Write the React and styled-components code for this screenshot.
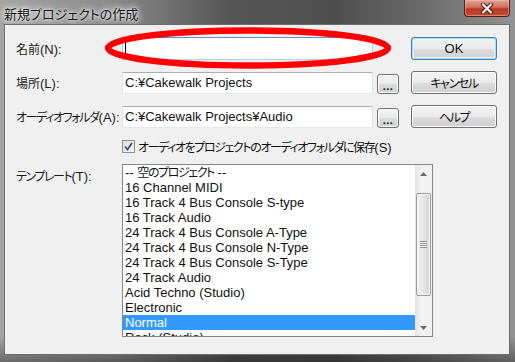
import React from "react";
import styled, { createGlobalStyle, css } from "styled-components";

const GlobalStyle = createGlobalStyle`
  html, body { margin: 0; padding: 0; background: #3c3c3c; }
  body {
    font-family: "Liberation Sans", "Noto Sans CJK JP", sans-serif;
    font-size: 13px;
    font-feature-settings: "palt";
    color: #111;
  }
  * { box-sizing: border-box; }
`;

// Meiryo UI kana are much narrower than Noto's, so squeeze the kana runs
const Jp = styled.span`
  font-size: 12px;
  letter-spacing: ${(p) => (p.kanji ? "0" : "-1.4px")};
`;

const templates = [
  "16 Channel MIDI",
  "16 Track 4 Bus Console S-type",
  "16 Track Audio",
  "24 Track 4 Bus Console A-Type",
  "24 Track 4 Bus Console N-Type",
  "24 Track 4 Bus Console S-Type",
  "24 Track Audio",
  "Acid Techno (Studio)",
  "Electronic",
  "Normal",
  "Rock (Studio)",
];

const Window = styled.div`
  position: relative;
  width: 515px;
  height: 362px;
  display: flex;
  flex-direction: column;
  padding: 0 5px 7px 4px;
  background:
    linear-gradient(to bottom, rgba(0,0,0,0) 93%, rgba(0,0,0,0.35) 100%),
    linear-gradient(to right, #a4a4a4 0%, #8a8a8a 22%, #555 45%, #4e4e4e 65%, #6a6a6a 82%, #939393 100%);
`;

const TitleBar = styled.div`
  height: 24px;
  flex-shrink: 0;
  display: flex;
  justify-content: space-between;
  align-items: flex-start;
`;

const Title = styled.div`
  padding-top: 4px;
  font-size: 13px;
  color: #141414;
  text-shadow: 0 0 6px rgba(255,255,255,0.95), 0 0 10px rgba(255,255,255,0.8), 0 0 3px rgba(255,255,255,0.9);
`;

const CloseButton = styled.div`
  width: 46px;
  height: 17px;
  display: flex;
  align-items: center;
  justify-content: center;
  border: 1px solid #5a1a12;
  border-top: none;
  border-radius: 0 0 4px 4px;
  background: linear-gradient(to bottom, #e2a396 0%, #d0705c 45%, #b63a24 55%, #c24a31 100%);
  box-shadow: inset 0 0 0 1px rgba(255,200,190,0.45);
`;

const Client = styled.div`
  flex: 1;
  background: #f0f0f0;
  border: 1px solid #6c6c6c;
  display: grid;
  grid-template-columns: 106px 251px 38px 86px;
  grid-template-rows: 23px 23px 23px 14px 173px;
  row-gap: 11px;
  padding: 12px 0 0 11px;
  align-content: start;
`;

const Label = styled.div`
  align-self: ${(p) => (p.top ? "start" : "center")};
  padding-top: ${(p) => (p.top ? "3px" : "0")};
  white-space: nowrap;
  color: #1a1a1a;
`;

const TextBox = styled.div`
  height: ${(p) => (p.focused ? "23px" : "22px")};
  align-self: center;
  background: #fff;
  border: 1px solid;
  border-color: ${(p) =>
    p.focused ? "#5c93bc #b5cfe7 #b5cfe7 #a4c9e3" : "#abadb3 #dbdfe6 #e3e9ef #e2e3ea"};
  display: flex;
  align-items: center;
  padding-left: 2px;
  white-space: nowrap;
  overflow: hidden;
`;

const Caret = styled.span`
  width: 1px;
  height: 19px;
  background: #000;
`;

const buttonBase = css`
  border: 1px solid #707070;
  border-radius: 3px;
  background: linear-gradient(to bottom, #f2f2f2 0%, #ebebeb 50%, #dddddd 51%, #cfcfcf 100%);
  box-shadow: inset 0 0 0 1px #fcfcfc;
  display: flex;
  align-items: center;
  justify-content: center;
  color: #111;
`;

const BrowseButton = styled.div`
  ${buttonBase}
  width: 22px;
  height: 20px;
  margin-left: 4px;
  align-self: end;
  font-weight: bold;
  font-size: 11px;
  padding-top: 4px;
  letter-spacing: 0.5px;
`;

const Button = styled.div`
  ${buttonBase}
  height: 23px;
  ${(p) =>
    p.primary &&
    css`
      border-color: #3c7fb1;
      box-shadow: inset 0 0 0 1px #9fdcf6, inset 0 0 0 2px #e4f5fc;
    `}
`;

const CheckRow = styled.div`
  grid-column: 2 / 5;
  display: flex;
  align-items: center;
  gap: 3px;
  white-space: nowrap;
`;

const CheckBox = styled.div`
  width: 13px;
  height: 13px;
  border: 1px solid #8e8f8f;
  background: linear-gradient(135deg, #dcdcdc 0%, #f6f6f6 100%);
  display: flex;
  align-items: center;
  justify-content: center;
`;

const ListBox = styled.div`
  grid-column: 2 / 5;
  width: 311px;
  height: 173px;
  border: 1px solid #828790;
  background: #fff;
  display: flex;
`;

const List = styled.div`
  flex: 1;
  overflow: hidden;
`;

const Item = styled.div`
  height: 15px;
  line-height: 15px;
  padding-left: 2px;
  white-space: nowrap;
  background: ${(p) => (p.selected ? "#3399ff" : "transparent")};
  color: ${(p) => (p.selected ? "#fff" : "#111")};
`;

const ScrollBar = styled.div`
  width: 17px;
  display: flex;
  flex-direction: column;
  background: linear-gradient(to right, #e3e3e3, #f2f2f2 40%, #f2f2f2);
`;

const ArrowButton = styled.div`
  height: 17px;
  display: flex;
  align-items: center;
  justify-content: center;
`;

const Track = styled.div`
  flex: 1;
  display: flex;
  flex-direction: column;
  padding: 11px 0 0;
`;

const Thumb = styled.div`
  height: 103px;
  margin: 0 1px;
  border: 1px solid #9a9a9a;
  border-radius: 2px;
  background: linear-gradient(to right, #f2f2f2 0%, #e6e6e6 50%, #d4d4d4 100%);
  box-shadow: inset 0 0 0 1px #fafafa;
  display: flex;
  align-items: center;
  justify-content: center;
`;

const Grip = styled.div`
  width: 7px;
  height: 7px;
  background: repeating-linear-gradient(to bottom, #8a8a8a 0 1px, #fff 1px 2px);
`;

const Annotation = styled.svg`
  position: absolute;
  left: 104px;
  top: 27px;
  pointer-events: none;
`;

function Arrow({ up }) {
  return (
    <svg width="7" height="4" viewBox="0 0 7 4">
      <polygon points={up ? "0,4 3.5,0 7,4" : "0,0 7,0 3.5,4"} fill="#6a6a6a" />
    </svg>
  );
}

export default function App() {
  return (
    <>
      <GlobalStyle />
      <Window>
        <TitleBar>
          <Title>新規プロジェクトの作成</Title>
          <CloseButton>
            <svg width="14" height="11" viewBox="0 0 14 11">
              <path d="M3 1.5 L11 9.5 M11 1.5 L3 9.5" stroke="#4a1008" strokeWidth="4" strokeLinecap="round" />
              <path d="M3 1.5 L11 9.5 M11 1.5 L3 9.5" stroke="#fff" strokeWidth="2.2" strokeLinecap="round" />
            </svg>
          </CloseButton>
        </TitleBar>
        <Client>
          <Label>
            <Jp kanji>名前</Jp>(N):
          </Label>
          <TextBox focused>
            <Caret />
          </TextBox>
          <div />
          <Button primary>OK</Button>

          <Label>
            <Jp kanji>場所</Jp>(L):
          </Label>
          <TextBox>C:¥Cakewalk Projects</TextBox>
          <BrowseButton>...</BrowseButton>
          <Button>
            <Jp>キャンセル</Jp>
          </Button>

          <Label>
            <Jp>オーディオフォルダ</Jp>(A):
          </Label>
          <TextBox>C:¥Cakewalk Projects¥Audio</TextBox>
          <BrowseButton>...</BrowseButton>
          <Button>
            <Jp>ヘルプ</Jp>
          </Button>

          <div />
          <CheckRow>
            <CheckBox>
              <svg width="9" height="9" viewBox="0 0 9 9">
                <path d="M1 4.5 L3.5 7.5 L8 1" stroke="#3a4f80" strokeWidth="1.8" fill="none" />
              </svg>
            </CheckBox>
            <span>
              <Jp>オーディオをプロジェクトのオーディオフォルダに保存</Jp>(S)
            </span>
          </CheckRow>

          <Label top>
            <Jp>テンプレート</Jp>(T):
          </Label>
          <ListBox>
            <List>
              <Item>
                -- <Jp>空のプロジェクト</Jp> --
              </Item>
              {templates.map((t) => (
                <Item key={t} selected={t === "Normal"}>
                  {t}
                </Item>
              ))}
            </List>
            <ScrollBar>
              <ArrowButton>
                <Arrow up />
              </ArrowButton>
              <Track>
                <Thumb>
                  <Grip />
                </Thumb>
              </Track>
              <ArrowButton>
                <Arrow />
              </ArrowButton>
            </ScrollBar>
          </ListBox>
        </Client>
        <Annotation width="288" height="42" viewBox="0 0 288 42">
          <ellipse cx="144" cy="21" rx="140" ry="17.5" fill="none" stroke="#ff0000" strokeWidth="6.5" />
        </Annotation>
      </Window>
    </>
  );
}
